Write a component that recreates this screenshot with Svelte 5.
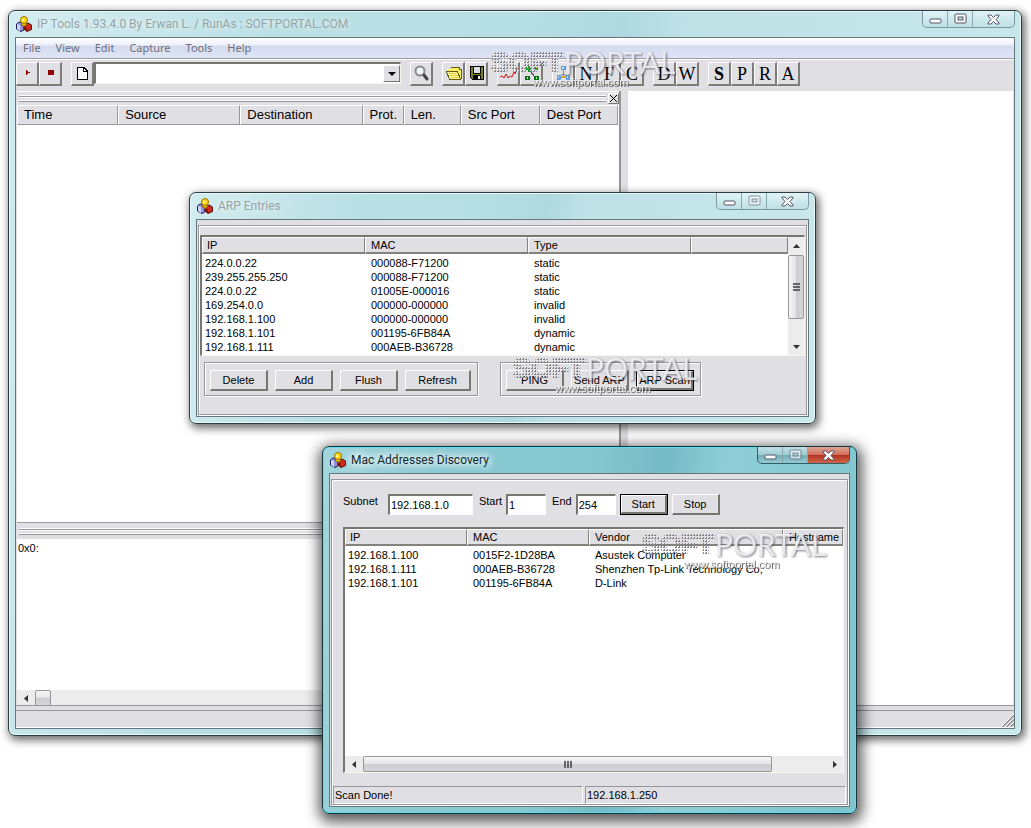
<script lang="ts">
  type Tool = { icon?: string; letter?: string; label: string; bold?: boolean };

  const menus = ['File', 'View', 'Edit', 'Capture', 'Tools', 'Help'];

  const startTools: Tool[] = [
    { icon: 'play', label: 'Start capture' },
    { icon: 'stop', label: 'Stop capture' },
  ];

  const toolGroups: Tool[][] = [
    [{ icon: 'search', label: 'Find' }],
    [
      { icon: 'open', label: 'Open' },
      { icon: 'save', label: 'Save' },
    ],
    [
      { icon: 'chart', label: 'Statistics' },
      { icon: 'nodes', label: 'Connections' },
    ],
    [
      { icon: 'tree', label: 'Network' },
      { letter: 'N', label: 'Netstat' },
      { letter: 'F', label: 'Forward table' },
      { letter: 'C', label: 'Connections' },
    ],
    [
      { letter: 'D', label: 'DNS' },
      { letter: 'W', label: 'Whois' },
    ],
    [
      { letter: 'S', label: 'Scan', bold: true },
      { letter: 'P', label: 'Ping' },
      { letter: 'R', label: 'Route' },
      { letter: 'A', label: 'ARP' },
    ],
  ];

  const packetColumns = [
    { name: 'Time', width: 101 },
    { name: 'Source', width: 122 },
    { name: 'Destination', width: 122 },
    { name: 'Prot.', width: 41 },
    { name: 'Len.', width: 57 },
    { name: 'Src Port', width: 79 },
    { name: 'Dest Port', width: 78 },
  ];

  const arpColumns = [
    { name: 'IP', width: 163 },
    { name: 'MAC', width: 163 },
    { name: 'Type', width: 163 },
    { name: '', width: 0 },
  ];

  const arpRows = [
    ['224.0.0.22', '000088-F71200', 'static', ''],
    ['239.255.255.250', '000088-F71200', 'static', ''],
    ['224.0.0.22', '01005E-000016', 'static', ''],
    ['169.254.0.0', '000000-000000', 'invalid', ''],
    ['192.168.1.100', '000000-000000', 'invalid', ''],
    ['192.168.1.101', '001195-6FB84A', 'dynamic', ''],
    ['192.168.1.111', '000AEB-B36728', 'dynamic', ''],
  ];

  const macColumns = [
    { name: 'IP', width: 122 },
    { name: 'MAC', width: 122 },
    { name: 'Vendor', width: 194 },
    { name: 'Hostname', width: 0 },
  ];

  const macRows = [
    ['192.168.1.100', '0015F2-1D28BA', 'Asustek Computer', ''],
    ['192.168.1.111', '000AEB-B36728', 'Shenzhen Tp-Link Technology Co,', ''],
    ['192.168.1.101', '001195-6FB84A', 'D-Link', ''],
  ];

  let filter = $state('');
  let subnet = $state('192.168.1.0');
  let first = $state('1');
  let last = $state('254');
</script>

{#snippet titlebar(title: string, fixed: boolean)}
  <header class="titlebar">
    <svg class="app-icon" viewBox="0 0 16 16" aria-hidden="true">
      <path d="M.5 8L3 6l5 1v7l-3 1.500L.5 13z" fill="#8f93dc" stroke="#1c1c5c" />
      <path d="M1 8l3 1v6l-3-2z" fill="#d4d6ff" />
      <path d="M8 9l4-2 3.500 2v4.500L11 15.500 8 13z" fill="#d22a1c" stroke="#4d0a06" />
      <path d="M8 9.500l3 2V15l-3-2z" fill="#8d120a" />
      <path d="M5.500 6h5v3L8 10.500 5.500 9z" fill="#f3b400" stroke="#7c5c00" />
      <circle cx="8" cy="4" r="3.500" fill="#ffd616" stroke="#9c7400" />
      <path d="M6 3h2v2H6z" fill="#fff6a8" />
    </svg>
    <h2>{title}</h2>
    <div class="controls">
      <button aria-label="Minimize">
        <svg width="13" height="13" viewBox="0 0 13 13"><rect x="1" y="6" width="11" height="4" rx="1" fill="#fff" stroke="#545468" /></svg>
      </button>
      <button aria-label="Maximize" class:dim={fixed}>
        <svg width="13" height="13" viewBox="0 0 13 13">
          <rect x="1" y="1" width="11" height="9" rx="1" fill="#fff" stroke="#545468" />
          <rect x="4" y="4" width="5" height="3" fill="#b8dde2" stroke="#545468" />
        </svg>
      </button>
      <button aria-label="Close" class="close">
        <svg width="13" height="13" viewBox="0 0 13 13">
          <path d="M1 2h3l2.500 2.500L9 2h3v1L9 6.500l3 3.500v1H9L6.500 8.500 4 11H1v-1l3-3.500L1 3z" fill="#fff" stroke="#545468" />
        </svg>
      </button>
    </div>
  </header>
{/snippet}

{#snippet toolIcon(name: string)}
  <svg width="19" height="19" viewBox="0 0 19 19" shape-rendering="crispEdges" aria-hidden="true">
    {#if name === 'play'}
      <path d="M8 6h1v1h1v1h2v1h-2v1H9v1H8z" fill="#900000" />
    {:else if name === 'stop'}
      <path d="M7 6h6v5H7z" fill="#900000" />
    {:else if name === 'new'}
      <path d="M4 3h7l4 4v9H4z" fill="#000" />
      <path d="M5 4h5v4h4v7H5zM11 5l2 2h-2z" fill="#fff" />
    {:else if name === 'search'}
      <g shape-rendering="auto">
        <circle cx="8" cy="7" r="4.500" fill="#eef6fa" stroke="#8a8a8a" stroke-width="2" />
        <path d="M12 11l3 4" stroke="#444" stroke-width="3" stroke-linecap="round" />
      </g>
    {:else if name === 'open'}
      <path d="M7 3h8v2h2v10H5V7H3V5h4z" fill="#ffee60" />
      <path d="M2 7h11l4 8H6z" fill="#fff8a0" />
      <path d="M2.500 7.500h11l3 8h-11zM7 3.500h8l1 2h1v9" fill="none" stroke="#605c10" />
      <path d="M5 9.500h8M6 11.500h8M7 13.500h8" stroke="#e8d030" />
    {:else if name === 'save'}
      <path d="M3 2h14v14H5l-2-2z" fill="#000" />
      <path d="M4 3h2v7h8V3h2v12H5l-1-1z" fill="#808020" />
      <path d="M7 3h6v6H7z" fill="#e0dfe3" />
      <path d="M6 11h8v4H6z" fill="#000" />
      <path d="M11 12h2v3h-2z" fill="#fff" />
    {:else if name === 'chart'}
      <path d="M1 13l2-1 2 2 2-4 2 4 2-2 2 1 2-5 1 2 2-6" fill="none" stroke="#d81818" shape-rendering="auto" />
    {:else if name === 'nodes'}
      <path d="M7 6l7 8" stroke="#555" />
      <path d="M4 3h1v1h1V2h2v2h1v2H8v2H6V6H4zM13 3h3v3h-3z" fill="#10a020" />
      <path d="M3 12h5v4H3zM12 12h5v4h-5z" fill="#0a7018" />
      <path d="M5 13h1v2H5zM14 13h1v2h-1z" fill="#b0ffb0" />
    {:else if name === 'tree'}
      <path d="M9.500 6v6M4 13l5-3 5 3" stroke="#888" fill="none" />
      <path d="M7 2h5v4H7zM3 11h4v5H3zM12 11h4v5h-4z" fill="#5e9fe4" />
      <path d="M8 3h2v2H8zM4 12h1v2H4zM13 12h1v2h-1z" fill="#c4e4ff" />
      <path d="M7 12h5v2H7z" fill="#d8a820" />
    {/if}
  </svg>
{/snippet}

{#snippet toolButton(tool: Tool)}
  <button class="tool" class:bold={tool.bold} title={tool.label} aria-label={tool.label}>
    {#if tool.icon}{@render toolIcon(tool.icon)}{:else}{tool.letter}{/if}
  </button>
{/snippet}

{#snippet arrow(dir: string)}
  <button class="arrow" aria-label="Scroll {dir}">
    <svg class={dir} width="7" height="7" viewBox="0 0 7 7"><path d="M5 0v7L1 3.500z" fill="#333" /></svg>
  </button>
{/snippet}

{#snippet listTable(columns: { name: string; width: number }[], rows: string[][])}
  <table class="list">
    <colgroup>
      {#each columns as column}
        <col style:width={column.width ? `${column.width}px` : 'auto'} />
      {/each}
    </colgroup>
    <thead>
      <tr>{#each columns as column}<th>{column.name}</th>{/each}</tr>
    </thead>
    <tbody>
      {#each rows as row}
        <tr>{#each row as cell}<td>{cell}</td>{/each}</tr>
      {/each}
    </tbody>
  </table>
{/snippet}

{#snippet watermark(place: string)}
  <svg class="watermark {place}" width="190" height="44" viewBox="0 0 190 44">
    <defs>
      <pattern id="dots-{place}" width="3" height="3" patternUnits="userSpaceOnUse">
        <rect width="2" height="2" fill="#808086" />
        <rect width="1" height="1" fill="#eee" />
      </pattern>
    </defs>
    <text class="soft" x="0" y="23" fill="url(#dots-{place})" stroke="url(#dots-{place})">SOFT</text>
    <text class="portal" x="73" y="25">PORTAL</text>
    <text class="site" x="42" y="37">www.softportal.com</text>
  </svg>
{/snippet}

<main class="desktop">
  <section class="window main-window">
    {@render titlebar('IP Tools 1.93.4.0 By Erwan L. / RunAs : SOFTPORTAL.COM', false)}
    <div class="client">
      <nav class="menubar">
        {#each menus as menu}<button>{menu}</button>{/each}
      </nav>

      <div class="toolbar">
        <div class="tools">
          {#each startTools as tool}{@render toolButton(tool)}{/each}
        </div>
        <div class="tools">
          {@render toolButton({ icon: 'new', label: 'New' })}
          <div class="combo">
            <select bind:value={filter} aria-label="Filter"><option value=""></option></select>
            <span class="drop"></span>
          </div>
        </div>
        {#each toolGroups as group}
          <div class="tools">
            {#each group as tool}{@render toolButton(tool)}{/each}
          </div>
        {/each}
      </div>

      <div class="panes">
        <div class="left-pane">
          <div class="grip">
            <span class="rails"></span>
            <button class="grip-close" aria-label="Close pane">
              <svg width="7" height="7" viewBox="0 0 7 7"><path d="M0 0l7 7M7 0L0 7" stroke="#000" /></svg>
            </button>
          </div>
          <div class="packets">
            <table>
              <colgroup>
                {#each packetColumns as column}<col style:width="{column.width}px" />{/each}
              </colgroup>
              <thead>
                <tr>{#each packetColumns as column}<th>{column.name}</th>{/each}</tr>
              </thead>
            </table>
          </div>
          <div class="grip lower"><span class="rails"></span></div>
          <div class="hex">0x0:</div>
          <div class="hscroll">
            {@render arrow('left')}
            <span class="thumb small"></span>
          </div>
        </div>
        <div class="splitter"></div>
        <div class="right-pane"></div>
      </div>

      <footer class="statusbar">
        <svg width="13" height="13" viewBox="0 0 13 13">
          <path d="M1 13L13 1M5 13l8-8M9 13l4-4" stroke="#8e8e96" stroke-width="2" />
          <path d="M0 13L13 0M4 13l9-9M8 13l5-5" stroke="#fff" />
        </svg>
      </footer>
    </div>
  </section>

  <section class="window arp-window">
    {@render titlebar('ARP Entries', true)}
    <div class="client">
      <div class="etched">
        <div class="listview">
          {@render listTable(arpColumns, arpRows)}
          <div class="vscroll">
            {@render arrow('up')}
            <span class="thumb"><i></i></span>
            <span class="track"></span>
            {@render arrow('down')}
          </div>
        </div>
        <div class="actions">
          <div class="group">
            <button class="push">Delete</button>
            <button class="push">Add</button>
            <button class="push">Flush</button>
            <button class="push wide">Refresh</button>
          </div>
          <div class="group">
            <button class="push">PING</button>
            <button class="push">Send ARP</button>
            <button class="push default">ARP Scan</button>
          </div>
        </div>
      </div>
    </div>
  </section>

  <section class="window active mac-window">
    {@render titlebar('Mac Addresses Discovery', true)}
    <div class="client">
      <div class="etched">
        <form class="range" onsubmit={(e) => e.preventDefault()}>
          <label for="subnet">Subnet</label>
          <input id="subnet" class="subnet" bind:value={subnet} />
          <label for="first">Start</label>
          <input id="first" bind:value={first} />
          <label for="last">End</label>
          <input id="last" bind:value={last} />
          <button class="push default">Start</button>
          <button class="push" type="button">Stop</button>
        </form>
        <div class="listview">
          {@render listTable(macColumns, macRows)}
          <div class="hscroll">
            {@render arrow('left')}
            <span class="thumb"><i></i></span>
            <span class="track"></span>
            {@render arrow('right')}
          </div>
        </div>
        <footer class="status">
          <span>Scan Done!</span>
          <span>192.168.1.250</span>
        </footer>
      </div>
    </div>
  </section>

  {@render watermark('over-toolbar')}
  {@render watermark('over-arp')}
  {@render watermark('over-mac')}
</main>

<style>
  :global(body) {
    background: #fff;
  }

  .desktop {
    position: relative;
    height: 100vh;
    overflow: hidden;
    font: 11px/14px 'Liberation Sans', Arial, sans-serif;
    color: #000;
  }

  .desktop * {
    box-sizing: border-box;
  }

  button {
    padding: 0;
    border: 0;
    background: none;
    font: inherit;
    color: inherit;
  }

  /* windows */
  .window {
    position: absolute;
    display: flex;
    flex-direction: column;
    padding: 0 6px 6px;
    border: 1px solid #2c3c40;
    border-radius: 7px;
    background: linear-gradient(100deg, #d3ecef 0, #b9e0e5 25%, #b6dfe4 45%, #aed9df 54%, #bfe2e7 60%, #c9e8ec 100%);
    box-shadow: inset 0 0 0 1px #e6f8fa, 2px 3px 8px 1px rgba(0, 0, 0, 0.6);
  }

  .main-window {
    inset: 10px 9px 92px 8px;
  }

  .arp-window {
    left: 189px;
    top: 192px;
    width: 627px;
    height: 232px;
  }

  .mac-window {
    left: 322px;
    top: 446px;
    width: 535px;
    height: 368px;
  }

  .window.active {
    border-color: #14363c;
    background: linear-gradient(100deg, #a3d6dc 0, #8ccbd4 20%, #86c7d0 45%, #76bac5 58%, #8fced7 68%, #7fc3cd 100%);
    box-shadow: inset 0 0 0 1px #5edcf0, 1px 4px 14px 4px rgba(0, 0, 0, 0.65);
  }

  .titlebar {
    display: flex;
    flex: none;
    align-items: center;
    height: 26px;
  }

  .app-icon {
    width: 16px;
    height: 16px;
    margin-left: 1px;
  }

  .titlebar h2 {
    flex: 1;
    margin: 0 0 0 5px;
    font: 12px/16px Roboto, 'Open Sans', sans-serif;
    color: #96a3a6;
    text-shadow: 0 0 6px #fff;
  }

  .active .titlebar h2 {
    color: #10282c;
    text-shadow: 0 0 6px #fff, 0 0 8px #fff, 0 0 10px #fff;
  }

  .controls {
    display: flex;
    align-self: flex-start;
    height: 17px;
    border: 1px solid #7b999e;
    border-top: 0;
    border-radius: 0 0 5px 5px;
    background: linear-gradient(#dff3f5, #bfe0e5);
    overflow: hidden;
  }

  .controls button {
    display: flex;
    align-items: center;
    justify-content: center;
    width: 25px;
    border-right: 1px solid #8aa8ad;
  }

  .controls .close {
    width: 41px;
    border-right: 0;
  }

  .controls .dim svg {
    opacity: 0.6;
  }

  .active .controls {
    border-color: #2f5e66;
    background: linear-gradient(#bfe0e5 0, #9fccd3 50%, #74abb5 52%, #93cbd3 100%);
  }

  .active .close {
    background: linear-gradient(#e0a494 0, #d0705c 48%, #b43420 52%, #d0654a 100%);
  }

  .client {
    display: flex;
    flex: 1;
    flex-direction: column;
    min-height: 0;
    border: 1px solid #64787c;
    background: #e0dfe3;
  }

  /* main window */
  .menubar {
    display: flex;
    flex: none;
    gap: 15px;
    height: 21px;
    padding: 0 7px;
    border-bottom: 1px solid #9d9da1;
    background: linear-gradient(#fff 0, #edf0fa 35%, #d4dbee 40%, #dfe5f6 100%);
    font: 11px/20px 'Noto Sans', 'Open Sans', sans-serif;
    color: #6e6e76;
  }

  .toolbar {
    display: flex;
    flex: none;
    gap: 9px;
    height: 32px;
    padding: 2px 0 0;
    border-top: 1px solid #fff;
  }

  .tools {
    display: flex;
  }

  .tool {
    display: flex;
    align-items: center;
    justify-content: center;
    width: 23px;
    height: 24px;
    border: 1px solid #fff;
    border-right: 2px solid #7d7c76;
    border-bottom: 2px solid #7d7c76;
    font: 18px/20px 'Liberation Serif', 'Times New Roman', serif;
  }

  .tool svg {
    flex: none;
  }

  .bold {
    font-weight: bold;
  }

  .combo {
    position: relative;
    width: 307px;
    height: 22px;
    border: 1px solid #f4f3ea;
    border-top: 2px solid #77766f;
    border-left: 2px solid #77766f;
  }

  .combo select {
    appearance: none;
    display: block;
    width: 100%;
    height: 100%;
    border: 0;
    border-radius: 0;
    background: #fff;
  }

  .drop {
    position: absolute;
    top: 1px;
    right: 0;
    display: grid;
    place-items: center;
    width: 17px;
    height: 17px;
    border: 1px solid #fff;
    border-right-color: #77766f;
    border-bottom-color: #77766f;
    background: #e0dfe3;
    pointer-events: none;
  }

  .drop::after {
    content: '';
    border: 4px solid transparent;
    border-top-color: #000;
    border-bottom: 0;
  }

  .panes {
    display: flex;
    flex: 1;
    min-height: 0;
    padding: 0 1px;
  }

  .left-pane {
    display: flex;
    flex-direction: column;
    width: 602px;
  }

  .grip {
    display: flex;
    align-items: center;
    gap: 2px;
    height: 14px;
    padding: 0 0 0 2px;
    border-top: 1px solid #fff;
  }

  .grip.lower {
    height: 17px;
    padding-top: 2px;
    border-top-color: #9a9a9f;
  }

  .rails {
    flex: 1;
    height: 6px;
    border: 1px solid #97979b;
    border-width: 1px 0;
    box-shadow: 0 -1px #fff;
    background: linear-gradient(#fff 1px, #e0dfe3 1px, #e0dfe3 3px, #fff 3px);
  }

  .grip-close {
    display: grid;
    place-items: center;
    width: 11px;
    height: 11px;
    border: 1px solid #fff;
    border-right-color: #77766f;
    border-bottom-color: #77766f;
  }

  .packets {
    flex: 1;
    padding-right: 1px;
    background: #fff;
  }

  table {
    width: 100%;
    table-layout: fixed;
    border-collapse: separate;
    border-spacing: 0;
  }

  .packets th {
    height: 20px;
    padding: 0 0 0 6px;
    border: 1px solid #fff;
    border-right-color: #97979b;
    border-bottom-color: #97979b;
    background: #e0dfe3;
    font: 13px/18px 'Liberation Sans', Arial, sans-serif;
    text-align: left;
    white-space: nowrap;
  }

  .hex {
    height: 151px;
    padding: 2px 1px;
    background: #fff;
  }

  .splitter {
    width: 9px;
    border-left: 2px solid #97979b;
    background: #e0dfe3;
  }

  .right-pane {
    flex: 1;
    background: #fff;
  }

  .statusbar {
    display: flex;
    flex: none;
    align-items: flex-end;
    justify-content: flex-end;
    height: 18px;
    margin-top: 4px;
    border-top: 1px solid #97979b;
    border-bottom: 1px solid #fff;
    box-shadow: 0 -4px #e0dfe3, 0 -5px #97979b;
  }

  /* scrollbars */
  .hscroll,
  .vscroll {
    display: flex;
    flex: none;
    background: #ececec;
  }

  .hscroll {
    height: 16px;
  }

  .vscroll {
    flex-direction: column;
    width: 16px;
  }

  .arrow {
    display: grid;
    place-items: center;
    flex: none;
    width: 18px;
    height: 16px;
  }

  .vscroll .arrow {
    width: 16px;
    height: 18px;
  }

  .right {
    transform: rotate(180deg);
  }

  .up {
    transform: rotate(90deg);
  }

  .down {
    transform: rotate(-90deg);
  }

  .thumb {
    display: grid;
    place-items: center;
    border: 1px solid #96969a;
    border-radius: 2px;
    background: linear-gradient(#f6f6f6 0, #e4e4e6 48%, #cdcdd1 52%, #d6d6da 100%);
  }

  .thumb.small {
    width: 16px;
  }

  .hscroll .thumb i {
    width: 8px;
    height: 7px;
    background: repeating-linear-gradient(90deg, #66666a 0 2px, transparent 2px 3px);
  }

  .vscroll .thumb {
    flex: none;
    height: 64px;
    background: linear-gradient(90deg, #f6f6f6 0, #e4e4e6 48%, #cdcdd1 52%, #d6d6da 100%);
  }

  .vscroll .thumb i {
    width: 7px;
    height: 8px;
    background: repeating-linear-gradient(#66666a 0 2px, transparent 2px 3px);
  }

  .track {
    flex: 1;
  }

  /* dialogs */
  .etched {
    display: flex;
    flex: 1;
    flex-direction: column;
    margin: 5px 1px 1px;
    border: 1px solid #97979b;
    box-shadow: inset 1px 1px #fff, 1px 1px #fff;
  }

  .listview {
    display: flex;
    border: 1px solid #f8f7ee;
    border-top: 2px solid #77766f;
    border-left: 2px solid #77766f;
    background: #fff;
  }

  .list th {
    height: 17px;
    padding: 0 0 0 5px;
    border: 1px solid #fff;
    border-right: 1px solid #83827c;
    border-bottom: 2px solid #83827c;
    background: #e0dfe3;
    font-weight: normal;
    text-align: left;
    white-space: nowrap;
  }

  .list th:first-child {
    padding-left: 4px;
  }

  .list td {
    height: 14px;
    padding: 0 0 0 6px;
    white-space: nowrap;
  }

  .list td:first-child {
    padding-left: 3px;
  }

  .list tbody::before {
    content: '';
    display: block;
    height: 2px;
  }

  .arp-window .etched {
    padding: 9px 1px 0;
  }

  .arp-window .listview {
    height: 121px;
  }

  .arp-window .list {
    align-self: flex-start;
  }

  .actions {
    display: flex;
    gap: 22px;
    padding: 6px 4px;
  }

  .group {
    display: flex;
    gap: 7px;
    padding: 7px 6px 4px 5px;
    border: 1px solid #97979b;
    box-shadow: inset 1px 1px #fff, 1px 1px #fff;
  }

  .push {
    width: 58px;
    height: 21px;
    border: 1px solid #fff;
    border-right: 2px solid #77766f;
    border-bottom: 2px solid #77766f;
    white-space: nowrap;
  }

  .push.wide {
    width: 66px;
  }

  .push.default {
    outline: 1px solid #000;
    outline-offset: -1px;
    border: 2px solid #fff;
    border-right: 3px solid #77766f;
    border-bottom: 3px solid #77766f;
  }

  .mac-window .etched {
    padding: 14px 1px 0;
  }

  .range {
    display: flex;
    gap: 4px;
    padding: 0 10px;
  }

  .range label + input {
    width: 40px;
    height: 21px;
    padding: 0 1px;
    border: 1px solid #fff;
    border-top: 2px solid #77766f;
    border-left: 2px solid #77766f;
    border-radius: 0;
    background: #fff;
    font: inherit;
    color: inherit;
  }

  .range input + label {
    margin-left: 2px;
  }

  .range label + .subnet {
    width: 85px;
    margin-left: 6px;
  }

  .range .push {
    width: 48px;
  }

  .mac-window .listview {
    flex: 1;
    flex-direction: column;
    justify-content: space-between;
    margin: 12px 2px 13px 10px;
  }

  .mac-window .hscroll .thumb {
    width: 409px;
  }

  .status {
    display: flex;
    gap: 2px;
    height: 18px;
  }

  .status span {
    flex: 1;
    padding: 1px 1px;
    border: 1px solid #fff;
    border-top-color: #97979b;
    border-left-color: #97979b;
  }

  .status span:first-child {
    flex: none;
    width: 250px;
  }

  /* watermark */
  .watermark {
    position: absolute;
    pointer-events: none;
  }

  .over-toolbar {
    left: 491px;
    top: 49px;
  }

  .over-arp {
    left: 513px;
    top: 355px;
  }

  .over-mac {
    left: 642px;
    top: 531px;
  }

  .soft {
    font: bold 27px 'Liberation Sans', Arial, sans-serif;
    stroke-width: 2px;
  }

  .portal {
    font: 30px Lato, sans-serif;
    fill: rgba(246, 246, 250, 0.85);
    filter: drop-shadow(1px 1px 1px rgba(60, 60, 70, 0.8));
  }

  .site {
    font: 11px 'Liberation Sans', Arial, sans-serif;
    fill: #eee;
    filter: drop-shadow(1px 1px 0 #666);
  }
</style>
